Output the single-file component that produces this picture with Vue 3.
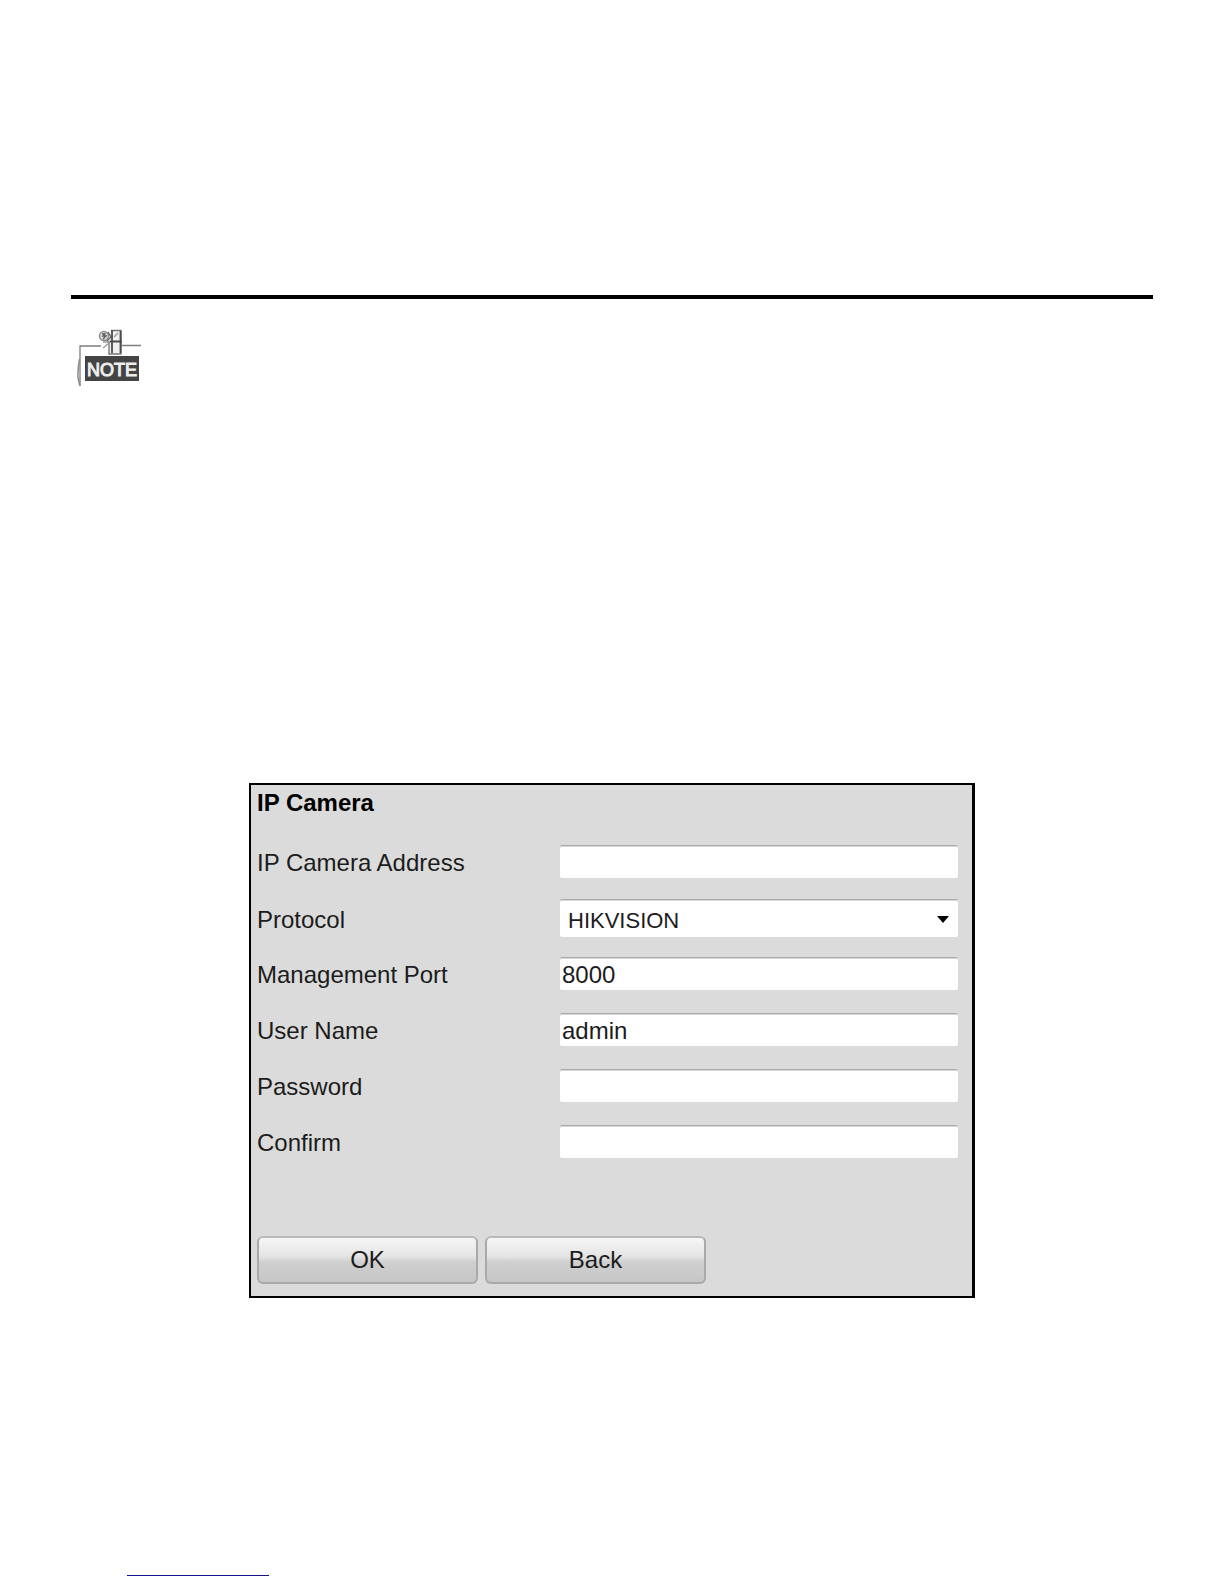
<script setup>
import { reactive } from 'vue'

const fields = [
  { id: 'address', label: 'IP Camera Address', type: 'text' },
  { id: 'protocol', label: 'Protocol', options: ['HIKVISION'] },
  { id: 'port', label: 'Management Port', type: 'text' },
  { id: 'user', label: 'User Name', type: 'text' },
  { id: 'password', label: 'Password', type: 'password' },
  { id: 'confirm', label: 'Confirm', type: 'password' },
]

const form = reactive({
  address: '',
  protocol: 'HIKVISION',
  port: '8000',
  user: 'admin',
  password: '',
  confirm: '',
})
</script>

<template>
  <main class="page">
    <hr class="rule" />

    <svg class="note" viewBox="0 0 70 64" role="img" aria-label="Note">
      <path d="M4 61V21H25M46 20.500H65" fill="none" stroke="#7d7d7d" stroke-width="1.300" />
      <path d="M3.500 34Q1.500 46 2 53L4 61" fill="none" stroke="#8a8a8a" stroke-width="1.500" />
      <path d="M35 5.500H45V29H33V16" fill="#f1f1f1" stroke="#777" stroke-width="1.400" />
      <path d="M36 5V28M34 16.500H46M44.500 6V28" fill="none" stroke="#4c4c4c" stroke-width="1.800" />
      <path d="M38 12L42 8M27 17H34M27 23L33 18" fill="none" stroke="#999" stroke-width="1.300" />
      <circle cx="28" cy="11" r="4.500" fill="#ddd" stroke="#8b8b8b" stroke-width="1.500" />
      <path d="M26 9H29L27 11H30L27 14M32 7L35 12L31 16" fill="none" stroke="#5c5c5c" stroke-width="1.300" />
      <rect x="9" y="31" width="54" height="25" fill="#444" />
      <text x="36" y="51" text-anchor="middle">NOTE</text>
    </svg>

    <form class="panel" @submit.prevent>
      <h1>IP Camera</h1>

      <div v-for="f in fields" :key="f.id" class="row" :class="{ 'row-select': f.options }">
        <label :for="f.id">{{ f.label }}</label>
        <div v-if="f.options" class="select">
          <select :id="f.id" v-model="form[f.id]">
            <option v-for="o in f.options" :key="o">{{ o }}</option>
          </select>
          <svg class="arrow" viewBox="0 0 12 7" aria-hidden="true">
            <path d="M0 0H12L6 7Z" />
          </svg>
        </div>
        <input v-else :id="f.id" v-model="form[f.id]" :type="f.type" autocomplete="off" />
      </div>

      <div class="actions">
        <button type="submit">OK</button>
        <button type="button">Back</button>
      </div>
    </form>

    <hr class="underline" />
  </main>
</template>

<style>
body {
  background: #fff;
}
</style>

<style scoped>
.page {
  box-sizing: border-box;
  padding: 295px 71px 8px;
  font-family: "Liberation Sans", Arial, sans-serif;
  font-size: 24px;
  line-height: 28px;
  color: #1c1c1c;
}

.rule {
  height: 4px;
  margin: 0;
  border: 0;
  background: #000;
}

.note {
  display: block;
  width: 70px;
  height: 64px;
  margin: 26px 0 0 5px;
}

.note text {
  font-size: 18px;
  fill: #eee;
  stroke: #eee;
  stroke-width: 1px;
}

.panel {
  box-sizing: border-box;
  max-width: 726px;
  margin: 394px auto 0;
  padding: 4px 14px 12px 6px;
  border: 2px solid #000;
  border-right-width: 3px;
  background: #dbdbdb;
}

h1 {
  margin: 0 0 16px;
  font-size: 24px;
  line-height: 28px;
  color: #000;
}

.row {
  box-sizing: border-box;
  display: grid;
  grid-template-columns: 303px 1fr;
  align-items: center;
  height: 56px;
}

.row-select {
  align-items: baseline;
  padding-top: 10px;
}

label {
  padding-top: 4px;
}

input,
select {
  box-sizing: border-box;
  width: 100%;
  min-width: 0;
  border: 0;
  border-top: 1px solid #aaa;
  border-radius: 2px;
  background: #fff;
  font-family: inherit;
  color: #1c1c1c;
  outline: none;
}

input {
  height: 33px;
  padding: 2px 2px 0;
  font-size: 24px;
  box-shadow: inset 0 1px #d8d8d8;
}

.select {
  position: relative;
}

select {
  display: block;
  height: 38px;
  padding: 3px 32px 0 8px;
  appearance: none;
  font-size: 22px;
  box-shadow: inset 0 1px #d8d8d8;
}

.arrow {
  position: absolute;
  top: 17px;
  right: 9px;
  width: 12px;
  height: 7px;
  fill: #000;
  pointer-events: none;
}

.actions {
  display: flex;
  gap: 7px;
  margin-top: 67px;
}

button {
  box-sizing: border-box;
  width: 221px;
  height: 48px;
  padding: 0;
  border: 2px solid #a9a9a9;
  border-top-color: #b8b8b8;
  border-radius: 6px;
  background: linear-gradient(#f6f6f6 0%, #e4e4e4 42%, #cfcfcf 55%, #c6c6c6 100%);
  font-family: inherit;
  font-size: 24px;
  color: #1c1c1c;
}

.underline {
  width: 142px;
  height: 1px;
  margin: 277px 0 0 56px;
  border: 0;
  background: #14148a;
}
</style>
